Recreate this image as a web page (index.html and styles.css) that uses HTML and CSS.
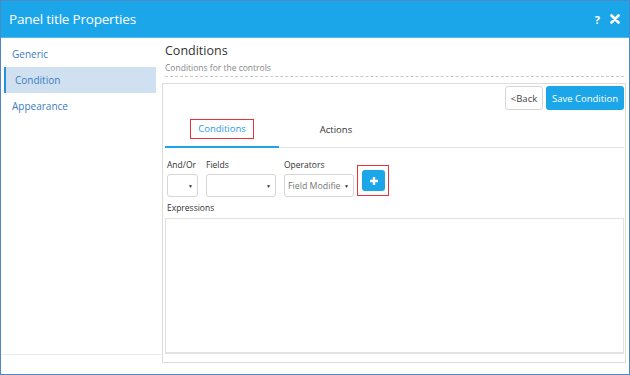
FILE: index.html
```html
<!DOCTYPE html>
<html lang="en">
  <head>
    <meta charset="UTF-8" />
    <title>Panel title Properties</title>
    <link rel="stylesheet" href="styles.css">
  </head>
  <body>
    <div class="dialog">
      <div class="dialog_header">
        <h1>Panel title Properties</h1>
        <div class="header_icons">
          <span class="help">?</span>
          <svg width="10" height="10" viewBox="0 0 10 10">
            <path d="M1.5 1.5 L8.5 8.5 M8.5 1.5 L1.5 8.5" stroke="#fff" stroke-width="2.6" stroke-linecap="round" />
          </svg>
        </div>
      </div>

      <div class="dialog_body">
        <div class="sidebar">
          <ul class="menu">
            <li>Generic</li>
            <li class="active">Condition</li>
            <li>Appearance</li>
          </ul>
        </div>

        <div class="main">
          <div class="section_title">
            <h2>Conditions</h2>
            <p>Conditions for the controls</p>
          </div>

          <div class="panel">
            <div class="toolbar">
              <button class="btn btn_back">&lt;Back</button>
              <button class="btn btn_save">Save Condition</button>
            </div>

            <div class="tabs">
              <div class="tab tab_active"><span class="marked">Conditions</span></div>
              <div class="tab">Actions</div>
            </div>

            <div class="fields_row">
              <div class="field">
                <label>And/Or</label>
                <div class="select select_small"><span></span><i>▼</i></div>
              </div>
              <div class="field">
                <label>Fields</label>
                <div class="select select_mid"><span></span><i>▼</i></div>
              </div>
              <div class="field">
                <label>Operators</label>
                <div class="select select_mid"><span>Field Modifie</span><i>▼</i></div>
              </div>
              <div class="add_wrap">
                <button class="btn_add">
                  <svg width="10" height="10" viewBox="0 0 10 10">
                    <path d="M5 1 V9 M1 5 H9" stroke="#fff" stroke-width="2.4" />
                  </svg>
                </button>
              </div>
            </div>

            <label class="expr_label">Expressions</label>
            <div class="expressions"></div>
          </div>
        </div>
      </div>
    </div>
  </body>
</html>
```

FILE: styles.css
```css
* {
  margin: 0;
  padding: 0;
  box-sizing: border-box;
}

body {
  font-family: "Open Sans", "Liberation Sans", sans-serif;
  background-color: #fff;
}

.dialog {
  width: 630px;
  height: 375px;
  border: 1px solid #4a88c6;
  display: flex;
  flex-direction: column;
  overflow: hidden;
}

.dialog_header {
  height: 37px;
  background-color: #1ca6ea;
  display: flex;
  align-items: center;
  justify-content: space-between;
  padding: 0 9px 0 8px;
  border-bottom: 1px solid #4fb7ee;

  h1 {
    color: #fff;
    font-size: 13.5px;
    font-weight: 400;
    letter-spacing: -0.2px;
  }

  .header_icons {
    display: flex;
    align-items: center;
    gap: 10px;
  }

  .help {
    color: #fff;
    font-weight: 700;
    font-size: 11px;
  }
}

.dialog_body {
  flex: 1;
  display: flex;
}

.sidebar {
  width: 161px;
  height: 317px;
  border-bottom: 1px solid #ececec;
  padding-top: 3px;

  .menu {
    list-style: none;
  }

  li {
    width: 152px;
    margin-left: 3px;
    height: 26px;
    line-height: 26px;
    padding-left: 8px;
    font-size: 10px;
    color: #3b7cbf;
  }

  .active {
    background-color: #cfe0f0;
    border-left: 2px solid #2b90dc;
    padding-left: 9px;
  }
}

.main {
  flex: 1;
  padding-right: 3px;

  .section_title {
    padding: 4px 2px 0 3px;

    h2 {
      font-size: 12.5px;
      font-weight: 400;
      color: #333;
      line-height: 18px;
    }

    p {
      font-size: 8.5px;
      color: #888;
      line-height: 14px;
      margin-top: 1px;
      padding-bottom: 1px;
      border-bottom: 1px dashed #c8c8c8;
    }
  }
}

.panel {
  margin-top: 6px;
  height: 280px;
  border: 1px solid #dcdcdc;
  padding: 2px 1px 0 2px;

  .toolbar {
    display: flex;
    justify-content: flex-end;
    gap: 3px;
  }

  .btn {
    height: 24px;
    font-family: inherit;
    font-size: 9.5px;
    border-radius: 3px;
  }

  .btn_back {
    width: 38px;
    background-color: #fff;
    border: 1px solid #d4d4d4;
    color: #444;
  }

  .btn_save {
    width: 78px;
    background-color: #1ca6ea;
    border: none;
    color: #fff;
  }
}

.tabs {
  display: flex;
  margin-top: 2px;
  height: 36px;
  border-bottom: 1px solid #e4e4e4;

  .tab {
    width: 114px;
    display: flex;
    align-items: center;
    justify-content: center;
    font-size: 9.5px;
    color: #333;
  }

  .tab_active {
    color: #2e9ce6;
    border-bottom: 2px solid #1ca6ea;
    margin-bottom: -1px;
    padding-bottom: 1px;
  }

  .marked {
    border: 1px solid #e8333a;
    padding: 2px 7px 3px;
  }
}

.fields_row {
  display: flex;
  align-items: flex-start;
  gap: 8px;
  padding: 10px 0 0 2px;

  .field {
    display: flex;
    flex-direction: column;
    gap: 3px;
  }

  label {
    font-size: 8.5px;
    color: #333;
    line-height: 13px;
  }

  .select {
    height: 23px;
    border: 1px solid #d6d6d6;
    border-radius: 3px;
    display: flex;
    align-items: center;
    gap: 2px;
    padding: 0 4px 0 3px;
    font-size: 8.8px;
    color: #777;
    white-space: nowrap;

    span {
      flex: 1;
    }

    i {
      font-style: normal;
      font-size: 5px;
      color: #333;
    }
  }

  .select_small {
    width: 31px;
  }

  .select_mid {
    width: 70px;
  }

  .add_wrap {
    margin-top: 7px;
    margin-left: -5px;
    border: 1px solid #e8333a;
    padding: 4px 3px 4px 4px;
  }

  .btn_add {
    width: 23px;
    height: 21px;
    border: none;
    border-radius: 3px;
    background-color: #1ca6ea;
    display: flex;
    align-items: center;
    justify-content: center;
  }
}

.expr_label {
  display: block;
  font-size: 8.5px;
  color: #333;
  padding: 4px 0 0 2px;
  line-height: 14px;
}

.expressions {
  margin-top: 3px;
  height: 136px;
  border: 2px solid #e2e2e2;
  border-width: 1px 1px 2px 1px;
}
```
